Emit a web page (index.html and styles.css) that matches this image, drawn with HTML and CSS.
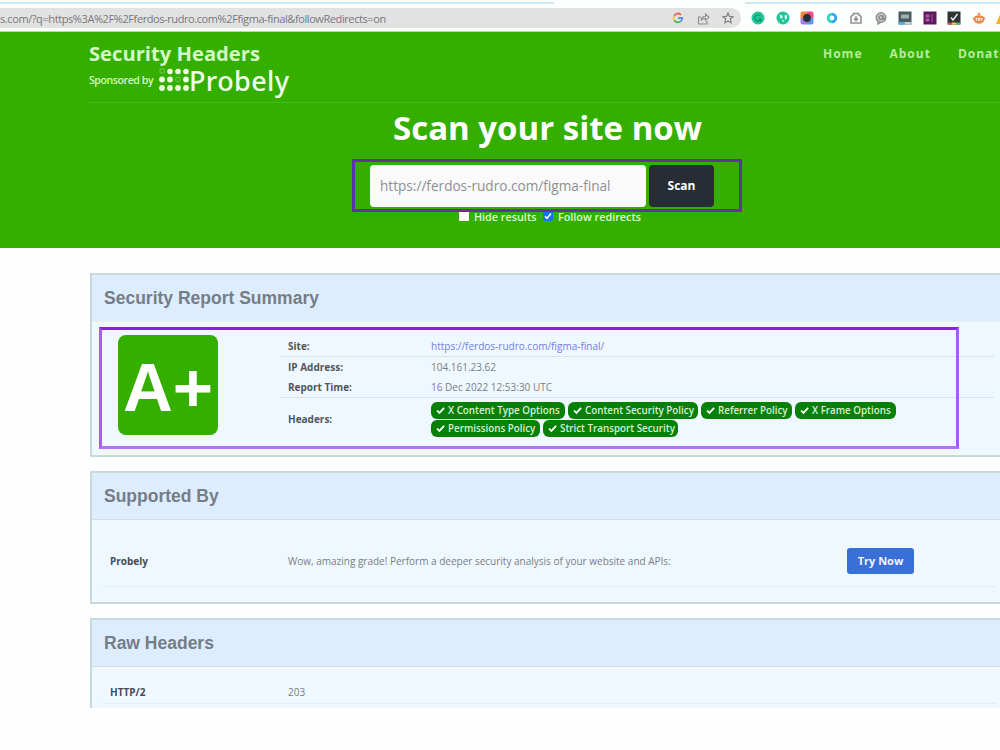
FILE: index.html
```
<!DOCTYPE html>
<html lang="en">
<head>
  <meta charset="UTF-8">
  <meta name="viewport" content="width=device-width, initial-scale=1.0">
  <title>Security Headers</title>
  <link rel="stylesheet" href="styles.css">
</head>
<body>
<div class="browser-bar">
  <div class="tab-line"><span class="line-left"></span><span class="line-right"></span></div>
  <div class="bar-row">
    <div class="address">
      <span class="url">s.com/?q=https%3A%2F%2Fferdos-rudro.com%2Ffigma-final&amp;followRedirects=on</span>
      <div class="address-icons">
        <svg width="12" height="12" viewBox="0 0 12 12" fill="none" stroke-width="1.8">
          <path d="M2.2 3.8A4.2 4.2 0 0 1 9 2.8" stroke="#e8604f"/>
          <path d="M2.2 3.8A4.6 4.6 0 0 0 2.4 8.4" stroke="#f2c14a"/>
          <path d="M2.4 8.4A4.2 4.2 0 0 0 8.8 9.2" stroke="#4fae68"/>
          <path d="M8.8 9.2A4.2 4.2 0 0 0 10.2 6H6.2" stroke="#5a8fee"/>
        </svg>
        <svg width="13" height="13" viewBox="0 0 13 13" fill="none" stroke="#8b8b8b" stroke-width="1.1">
          <path d="M4 5H1.5v7h8.500V9"/>
          <path d="M4 8.500C4.300 5.500 6 4.300 8.500 4.300V2L12 5.300 8.500 8.300V6.300C6.500 6.300 5 6.800 4 8.500z"/>
        </svg>
        <svg width="12" height="12" viewBox="0 0 12 12" fill="none" stroke="#858585" stroke-width="1.3">
          <path d="M6 1l1.500 3.300 3.500.4-2.600 2.400.7 3.600L6 8.900l-3.100 1.800.7-3.600L1 4.700l3.500-.4z"/>
        </svg>
      </div>
    </div>
    <div class="extensions">
      <svg viewBox="0 0 14 14"><circle cx="7" cy="7" r="6.500" fill="#22c49a"/><path d="M9.500 5A3.200 3.200 0 1 0 10 8H7.500M10 8v2.500" fill="none" stroke="#0b8d6c" stroke-width="1.200"/></svg>
      <svg viewBox="0 0 14 14"><circle cx="7" cy="7" r="6.500" fill="#22c49a"/><path d="M4 3.500l3 1.500-1 2.500-2-.5zM8.500 4.500l2.500-.5v3L9 9zM6 8.500l2 1-1 2z" fill="#d8fff3"/></svg>
      <svg viewBox="0 0 14 14"><path d="M2.500.5H7V7H.5V2.500a2 2 0 0 1 2-2z" fill="#f0883c"/><path d="M7 .5h4.500a2 2 0 0 1 2 2V7H7z" fill="#ef4a8a"/><path d="M.5 7H7v6.500H2.500a2 2 0 0 1-2-2z" fill="#a77bf0"/><path d="M7 7h6.500v4.500a2 2 0 0 1-2 2H7z" fill="#5c9be8"/><circle cx="7" cy="7" r="3.900" fill="#26303c"/></svg>
      <svg viewBox="0 0 14 14" fill="none" stroke-width="2.800"><path d="M7 3.200A3.800 3.800 0 0 0 7 10.800" stroke="#2fd6c6"/><path d="M7 3.200A3.800 3.800 0 0 1 7 10.800" stroke="#2ea9f0"/></svg>
      <svg viewBox="0 0 14 14" fill="none" stroke="#929292" stroke-width="1.600"><path d="M2 12V5.500L4.500 3.500V2.500h5v1L12 5.500V12z"/><path d="M7 5v4M5 7.500l2 2 2-2"/></svg>
      <svg viewBox="0 0 14 14" fill="none" stroke="#858585" stroke-width="1.300"><circle cx="7" cy="6.500" r="4.800" fill="#c9c9c9"/><circle cx="7" cy="6.500" r="1.900"/><path d="M9 4.500v3c.2 1 1.500.8 2-.2M4 10.500V13l3-1.800"/></svg>
      <svg viewBox="0 0 14 14"><rect x=".5" y=".5" width="13" height="13" fill="#4a5c60"/><path d="M3 3.500h8v4H3z" fill="#9fb0b3"/><path d="M.5 11h6v2.500h-6z" fill="#42b6e8"/><path d="M6.500 11h7v2.500h-7z" fill="#c3cdd0"/></svg>
      <svg viewBox="0 0 14 14"><rect x=".5" y=".5" width="13" height="13" fill="#5e1a5e"/><path d="M3 4h3v2H3zM3 8h3v2H3zM9 3v8" fill="#ad5ca9" stroke="#ad5ca9"/></svg>
      <svg viewBox="0 0 14 14"><rect x=".5" y=".5" width="13" height="13" fill="#303236"/><path d="M4 6.500l2 2.500L10.500 3" fill="none" stroke="#e8e8e8" stroke-width="1.500"/><path d="M1 11.500h4v2H1z" fill="#e04848"/><path d="M5 11.500h4v2H5z" fill="#e8cf45"/><path d="M9 11.500h4v2H9z" fill="#5bb75b"/></svg>
      <svg viewBox="0 0 14 14"><path d="M7 1l1.500 3h-3z" fill="#e2813b"/><path d="M2 6.500C3 3.500 11 3.500 12 6.500l1.500.5-1.300 2.200C11 14 3 14 1.800 9.200L.5 7z" fill="#e88a48"/><path d="M3.800 7h6.400v2.500H3.800z" fill="#fff"/><path d="M4.800 7.500h1.400v1.500H4.800zM7.800 7.500h1.400v1.500H7.800z" fill="#e2813b"/></svg>
      <svg viewBox="0 0 14 14"><path d="M5 1L0 13h8L10 3z" fill="#f6b21f"/></svg>
    </div>
  </div>
</div>

<header class="hero">
  <div class="hero-top">
    <div class="brand">
      <div class="brand-name">Security Headers</div>
      <div class="sponsor">
        <span class="sponsor-text">Sponsored by</span>
        <svg class="dots" width="30" height="24" viewBox="0 0 30 24" fill="#e9ffdf">
          <rect x="1" y="1" width="4" height="4" fill="none" stroke="#7fd05f" stroke-width=".8"/>
          <circle cx="11" cy="3.500" r="2.800"/><circle cx="19" cy="3.500" r="2.800"/><circle cx="27" cy="3.500" r="2.800"/>
          <circle cx="3" cy="11.500" r="2.900"/><circle cx="11" cy="11.500" r="2.900"/>
          <circle cx="19" cy="11.500" r="2.400" fill="none" stroke="#7fd05f" stroke-width=".8"/>
          <circle cx="27" cy="11.500" r="2.900"/>
          <circle cx="3" cy="20" r="2.900"/><circle cx="11" cy="20" r="2.900"/><circle cx="19" cy="20" r="2.900"/><circle cx="27" cy="20" r="2.900"/>
        </svg>
        <span class="probely">Probely</span>
      </div>
    </div>
    <nav class="menu">
      <a>Home</a>
      <a>About</a>
      <a>Donate</a>
    </nav>
  </div>
  <h1>Scan your site now</h1>
  <div class="scan-form">
    <div class="scan-input">https://ferdos-rudro.com/figma-final</div>
    <div class="scan-button">Scan</div>
  </div>
  <div class="options">
    <span class="check"></span>
    <span class="hide-label">Hide results</span>
    <span class="check checked">
      <svg width="10" height="10" viewBox="0 0 10 10"><path d="M2 5.300l2 2L8 2.500" fill="none" stroke="#fff" stroke-width="1.500"/></svg>
    </span>
    <span class="follow-label">Follow redirects</span>
  </div>
  <div class="mark mark-form"></div>
</header>

<main class="content">
  <section class="panel summary">
    <h2>Security Report Summary</h2>
    <div class="summary-body">
      <div class="grade">A+</div>
      <div class="report">
        <div class="row line"><b>Site:</b><span class="link">https://ferdos-rudro.com/figma-final/</span></div>
        <div class="row"><b>IP Address:</b><span>104.161.23.62</span></div>
        <div class="row line"><b>Report Time:</b><span>16 Dec 2022 12:53:30 UTC</span></div>
        <div class="row headers">
          <b>Headers:</b>
          <div class="pills">
            <span class="pill p1"><svg viewBox="0 0 10 10"><path d="M1.200 5l2.600 2.700L9 2"/></svg>X Content Type Options</span>
            <span class="pill p2"><svg viewBox="0 0 10 10"><path d="M1.200 5l2.600 2.700L9 2"/></svg>Content Security Policy</span>
            <span class="pill p3"><svg viewBox="0 0 10 10"><path d="M1.200 5l2.600 2.700L9 2"/></svg>Referrer Policy</span>
            <span class="pill p4"><svg viewBox="0 0 10 10"><path d="M1.200 5l2.600 2.700L9 2"/></svg>X Frame Options</span>
            <span class="pill p5"><svg viewBox="0 0 10 10"><path d="M1.200 5l2.600 2.700L9 2"/></svg>Permissions Policy</span>
            <span class="pill p6"><svg viewBox="0 0 10 10"><path d="M1.200 5l2.600 2.700L9 2"/></svg>Strict Transport Security</span>
          </div>
        </div>
      </div>
    </div>
    <div class="mark mark-summary"></div>
  </section>

  <section class="panel supported">
    <h2>Supported By</h2>
    <div class="entry support-entry">
      <b>Probely</b>
      <span class="offer">Wow, amazing grade! Perform a deeper security analysis of your website and APIs:</span>
      <span class="try">Try Now</span>
    </div>
  </section>

  <section class="panel raw">
    <h2>Raw Headers</h2>
    <div class="entry raw-entry">
      <b>HTTP/2</b>
      <span>203</span>
    </div>
  </section>
</main>
</body>
</html>
```
FILE: styles.css
```
* {
  box-sizing: border-box;
}
body {
  margin: 0;
  width: 1000px;
  height: 750px;
  overflow: hidden;
  background-color: #fefefe;
  font-family: "Open Sans", sans-serif;
  white-space: nowrap;
}

/* Browser bar */
.browser-bar {
  height: 32px;
  padding-top: 1px;
  background-color: #fdfefe;
  border-bottom: 1px solid #b9d9ae;
}
.tab-line {
  display: flex;
  justify-content: space-between;
  height: 7px;
}
.tab-line span {
  height: 2px;
  margin-top: 1px;
  background-color: #c9eaf5;
}
.line-left {
  width: 554px;
}
.line-right {
  width: 255px;
}
.bar-row {
  display: flex;
}
.address {
  display: flex;
  flex: none;
  justify-content: space-between;
  align-items: center;
  width: 741px;
  height: 20px;
  padding-right: 7px;
  background-color: #e2e2e3;
  border-radius: 0 10px 10px 0;
}
.url {
  font-size: 11px;
  letter-spacing: -0.41px;
  color: #77777c;
}
.address-icons {
  display: flex;
  align-items: center;
  gap: 12.5px;
}
.extensions {
  display: flex;
  align-items: center;
  gap: 10.5px;
  padding-left: 10px;
}
.extensions svg {
  flex: none;
  width: 14px;
  height: 14px;
}

/* Green header */
.hero {
  position: relative;
  height: 216px;
  background-color: #34af00;
  color: #fff;
}
.hero-top {
  display: flex;
  justify-content: space-between;
  height: 71px;
  margin-left: 89px;
  padding-top: 7px;
  border-bottom: 1px solid #4bb81d;
}
.brand-name {
  height: 28px;
  line-height: 28px;
  font-size: 20.2px;
  font-weight: 700;
  color: #d5f8c4;
}
.sponsor {
  display: flex;
  align-items: center;
  height: 26px;
}
.sponsor-text {
  width: 70px;
  font-size: 10.5px;
  font-weight: 600;
  letter-spacing: -0.4px;
  color: #d5f8c4;
}
.probely {
  font-size: 27px;
  font-weight: 500;
  line-height: 25px;
  letter-spacing: 0.4px;
  color: #f0ffe9;
  font-family: "Noto Sans", sans-serif;
}
.menu {
  display: flex;
  gap: 27px;
  width: 177px;
  height: 28px;
  line-height: 29px;
  font-size: 12px;
  font-weight: 700;
  letter-spacing: 1px;
  color: #b8eb9f;
}
.hero h1 {
  height: 50px;
  margin: 0 0 0 393px;
  line-height: 50px;
  font-size: 33px;
}
.scan-form {
  display: flex;
  gap: 3px;
  height: 42px;
  margin: 12px 0 0 370px;
}
.scan-input {
  width: 276px;
  padding-left: 10px;
  line-height: 41px;
  background-color: #fafafa;
  border-radius: 4px;
  font-size: 13.6px;
  color: #8c9094;
}
.scan-button {
  width: 65px;
  line-height: 42px;
  background-color: #282c34;
  border-radius: 4px;
  font-size: 12px;
  font-weight: 700;
  text-align: center;
}
.options {
  display: flex;
  align-items: center;
  height: 16px;
  margin: 1px 0 0 459px;
  font-size: 10.8px;
  font-weight: 600;
  color: #dff9d2;
}
.check {
  display: flex;
  width: 10px;
  height: 10px;
  background-color: #fff;
  border-radius: 1px;
}
.check.checked {
  background-color: #1674ea;
  border-radius: 2px;
}
.hide-label {
  width: 69px;
  margin-left: 5px;
}
.follow-label {
  margin-left: 5px;
}

/* Highlight frames lying over the page */
.mark {
  position: absolute;
  border-style: solid;
}
.mark-form {
  left: 352px;
  top: 127px;
  width: 390px;
  height: 53px;
  border-width: 3px;
  border-color: #6233a0;
}
.mark-summary {
  left: 7px;
  top: 52px;
  width: 860px;
  height: 122px;
  border-width: 3px;
  border-color: #8420e8 #a45cf5 #b274f7 #a45cf5;
}

/* Panels */
.content {
  display: flex;
  flex-direction: column;
  gap: 14px;
  margin: 25px 0 0 90px;
}
.panel {
  position: relative;
  border: 2px solid #c6d9dc;
  border-right: none;
  background-color: #f0f8ff;
}
.panel h2 {
  height: 47px;
  margin: 0;
  padding-left: 12px;
  line-height: 46px;
  background-color: #deedfe;
  border-bottom: 1px solid #cfdfe9;
  font-family: "Liberation Sans", Arial, sans-serif;
  font-size: 17.5px;
  color: #757d87;
}
.summary {
  height: 184px;
}
.summary h2 {
  border-bottom-color: #e8f2fe;
}
.supported {
  height: 133px;
}
.raw {
  height: 90px;
  border-bottom: none;
}
.summary-body {
  display: flex;
  padding-top: 13px;
}
.grade {
  width: 100px;
  height: 100px;
  margin-left: 26px;
  line-height: 106px;
  background-color: #34af00;
  border-radius: 8px;
  font-family: "Liberation Sans", Arial, sans-serif;
  font-size: 69px;
  font-weight: 700;
  text-align: center;
  color: #fff;
}
.report {
  width: 714px;
  margin-left: 62px;
  padding-top: 1px;
  font-size: 10px;
  color: #777d84;
}
.row {
  display: flex;
  align-items: center;
  height: 20px;
  padding-left: 8px;
}
.row.line {
  height: 21px;
  border-bottom: 1px solid #dde3e7;
}
.row b {
  width: 143px;
  color: #50565c;
}
.row .link {
  color: #6f7fe6;
}
.row.headers {
  height: 42px;
}
.pills {
  display: flex;
  flex-wrap: wrap;
  gap: 1px 3px;
  width: 480px;
}
.pill {
  display: flex;
  align-items: center;
  height: 17px;
  padding-left: 5px;
  background-color: #078007;
  border-radius: 6px;
  font-size: 9.8px;
  font-weight: 600;
  color: #d9f1d6;
}
.pill svg {
  width: 9px;
  height: 9px;
  margin-right: 3px;
  fill: none;
  stroke: #fff;
  stroke-width: 2;
}
.p1 { width: 134px; }
.p2 { width: 130px; }
.p3 { width: 91px; }
.p4 { width: 101px; }
.p5 { width: 109px; }
.p6 { width: 135px; }

.entry {
  display: flex;
  align-items: center;
  width: 894px;
  margin-left: 10px;
  padding-left: 8px;
  border-bottom: 1px solid #e3ecf0;
  font-size: 10px;
  color: #777d84;
}
.entry b {
  width: 178px;
  color: #454b51;
}
.support-entry {
  height: 67px;
  padding-top: 15px;
}
.offer {
  width: 559px;
}
.try {
  width: 67px;
  height: 26px;
  line-height: 26px;
  background-color: #3a6fd8;
  border-radius: 3px;
  font-size: 11px;
  font-weight: 700;
  text-align: center;
  color: #f2f6ff;
}
.raw-entry {
  height: 37px;
  padding-top: 14px;
}
```
